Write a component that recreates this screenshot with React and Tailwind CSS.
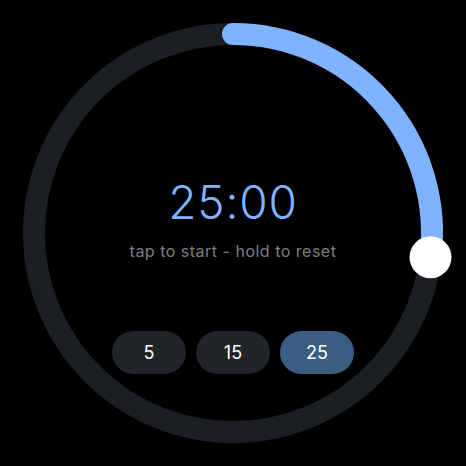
export default function App() {
  const cx = 233, cy = 233, r = 199;
  const ang = (97 * Math.PI) / 180;
  const ex = cx + r * Math.sin(ang);
  const ey = cy - r * Math.cos(ang);
  return (
    <div className="relative w-[466px] h-[466px] bg-black overflow-hidden" style={{ fontFamily: "Inter, 'Open Sans', sans-serif" }}>
      <svg className="absolute inset-0" width="466" height="466" viewBox="0 0 466 466">
        <circle cx={cx} cy={cy} r={r} fill="none" stroke="#1b1e22" strokeWidth="22" />
        <path d={`M ${cx} ${cy - r} A ${r} ${r} 0 0 1 ${ex} ${ey}`} fill="none" stroke="#7fb3ff" strokeWidth="22" strokeLinecap="round" />
        <circle cx={ex} cy={ey} r="21" fill="#ffffff" />
      </svg>
      <div className="relative flex flex-col items-center pt-[174px]">
        <div className="text-[46px] leading-[56px] font-light text-[#7fb3ff] tracking-[0.8px]">25:00</div>
        <div className="mt-[11px] text-[16px] leading-[20px] text-[#7b7e83] tracking-[0.5px]">tap to start - hold to reset</div>
        <div className="mt-[70px] flex gap-[10px]">
          <button className="w-[74px] h-[43px] rounded-full bg-[#212428] text-white text-[18px]">5</button>
          <button className="w-[74px] h-[43px] rounded-full bg-[#212428] text-white text-[18px]">15</button>
          <button className="w-[74px] h-[43px] rounded-full bg-[#3a5e82] text-white text-[18px]">25</button>
        </div>
      </div>
    </div>
  );
}
